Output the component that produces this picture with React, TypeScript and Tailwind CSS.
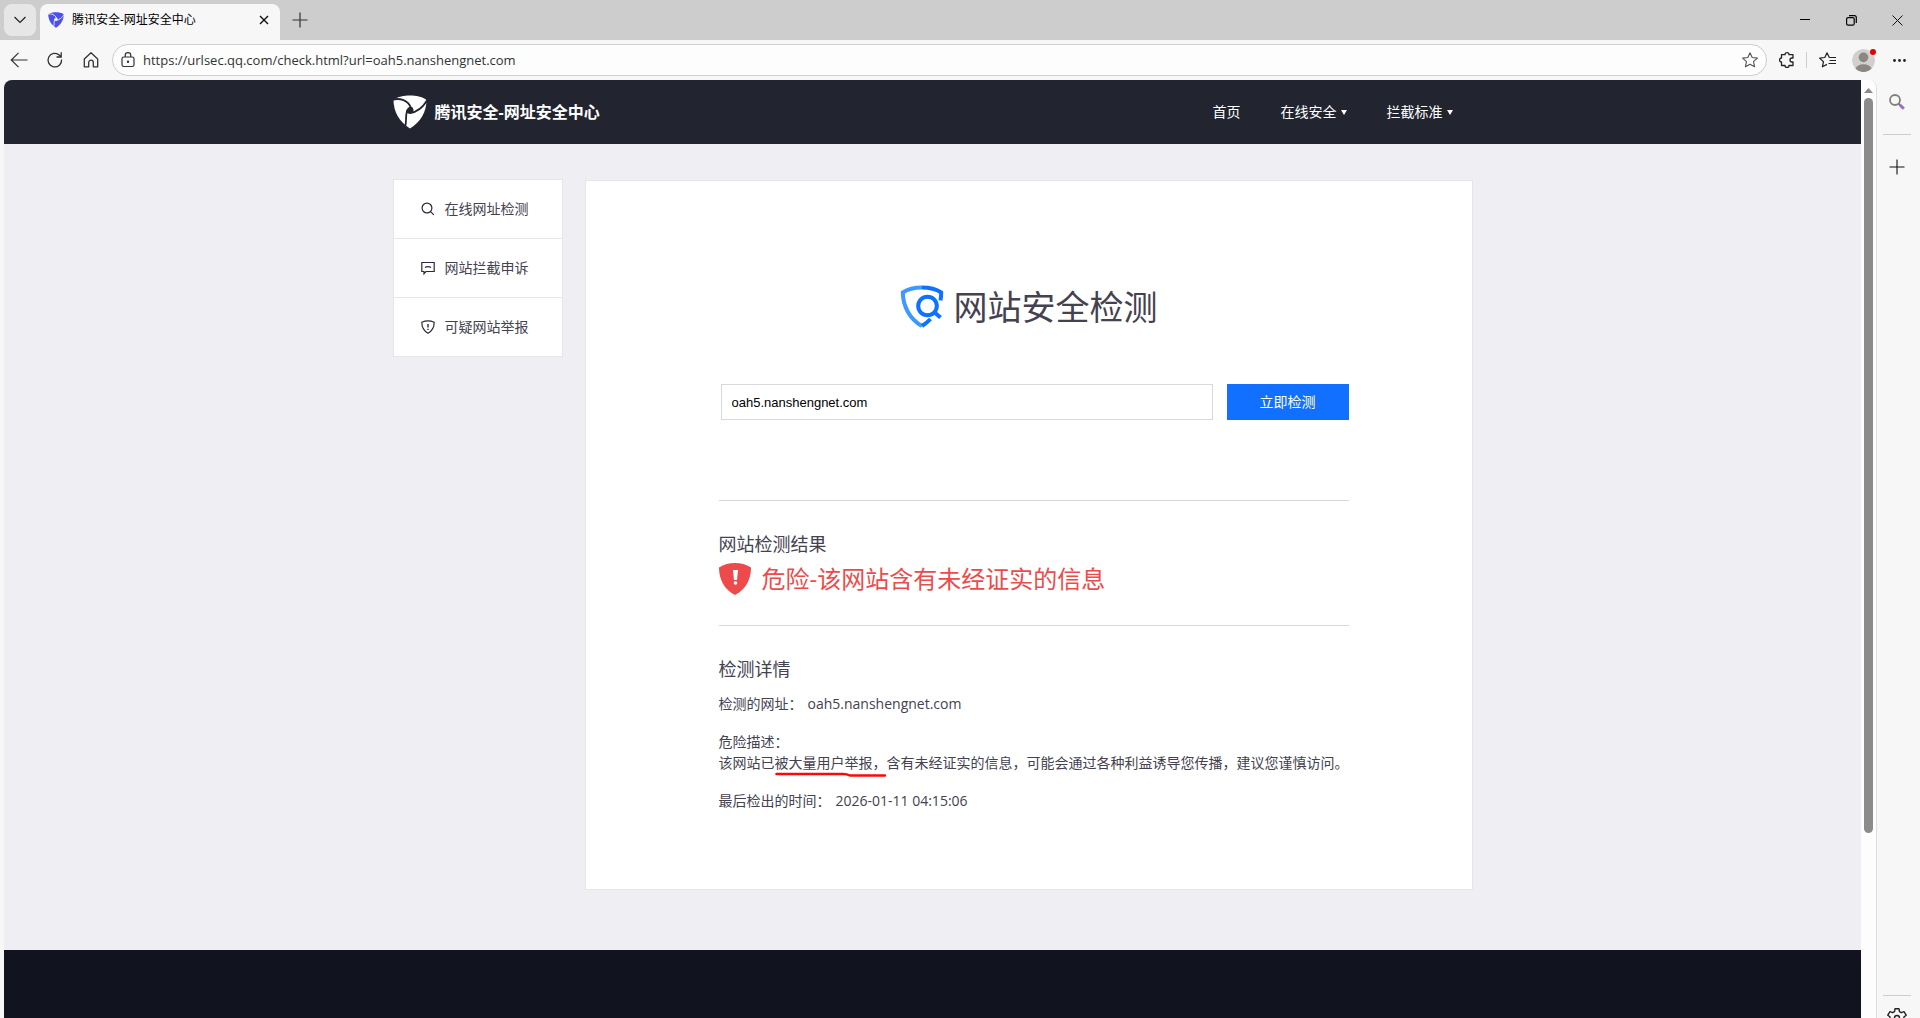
import React, { useState } from 'react';
import clsx from 'clsx';

const menuItems = [
  { label: '在线网址检测', icon: 'search' },
  { label: '网站拦截申诉', icon: 'comment' },
  { label: '可疑网站举报', icon: 'shield' },
];

const navItems = [
  { label: '首页', hasMenu: false },
  { label: '在线安全', hasMenu: true },
  { label: '拦截标准', hasMenu: true },
];

const Logo: React.FC<{ className: string; gapColor: string }> = ({ className, gapColor }) => (
  <svg viewBox="0 0 34 34" className={className} fill="none" aria-hidden="true">
    <path d="M.5 5C5 1.5 11 .5 17 .5S29 1.5 33.500 5C33.500 16 28 27 17 33.500 6 27 .5 16 .5 5Z" fill="currentColor" />
    <g stroke={gapColor} strokeLinecap="round">
      <path d="M0 4.500C7 3 15 5 18 13" strokeWidth="1.800" />
      <path d="M34 5.500C30 12 25 17 17 18" strokeWidth="1.800" />
      <path d="M12 32C14 27 12 23 14 16" strokeWidth="1.800" />
      <path d="M14 17C14 13 17 12 19 13 21 16 19 18 16 18Z" strokeWidth="1.500" fill={gapColor} />
    </g>
  </svg>
);

const MenuIcon: React.FC<{ name: string }> = ({ name }) => (
  <svg viewBox="0 0 14 14" className="size-3.5" fill="none" stroke="#2b2938" strokeWidth="1.2" aria-hidden="true">
    {name === 'search' && (
      <>
        <circle cx="6" cy="6" r="4.900" />
        <path d="M9.600 9.600 12.800 12.800" />
      </>
    )}
    {name === 'comment' && (
      <>
        <path d="M.8 1.500H13.200V10.500H5L3 12.700V10.500H.8Z" />
        <path d="M4 6.500C5.500 5.400 8.500 5.400 10 6.500" />
      </>
    )}
    {name === 'shield' && (
      <>
        <path d="M.8 2.200C4.500.6 9.500.6 13.200 2.200 13.200 7 11 11 7 13.200 3 11 .8 7 .8 2.200Z" />
        <path d="M7 4V7.500M7 8.700V10" strokeWidth="1.400" />
      </>
    )}
  </svg>
);

const TabBar: React.FC = () => (
  <div className="flex h-10 shrink-0 items-start bg-[#cdcdcd]">
    <button aria-label="标签页操作" className="m-1 flex size-8 items-center justify-center rounded-lg bg-[#e6e6e6]">
      <svg viewBox="0 0 12 12" className="size-3" fill="none" stroke="#222" strokeWidth="1.200">
        <path d="M.5 3 6 8.500 11.500 3" />
      </svg>
    </button>
    <div className="mt-1 flex h-9 w-60 items-center rounded-t-lg bg-[#f7f7f7] px-2 pb-1 text-black">
      <Logo className="h-4 w-4 text-[#4a50f0]" gapColor="#f7f7f7" />
      <span className="ml-2 flex-1 text-xs">腾讯安全-网址安全中心</span>
      <button aria-label="关闭标签页" className="flex size-4 items-center justify-center">
        <svg viewBox="0 0 10 10" className="size-2.5" fill="none" stroke="#111" strokeWidth="1.400">
          <path d="M1 1 9 9M9 1 1 9" />
        </svg>
      </button>
    </div>
    <button aria-label="新建标签页" className="ml-3 flex h-10 w-4 items-center justify-center">
      <svg viewBox="0 0 16 16" className="size-4" fill="none" stroke="#333" strokeWidth="1.200">
        <path d="M8 .5V15.500M.5 8H15.500" />
      </svg>
    </button>
    <div className="ml-auto flex h-10">
      <button aria-label="最小化" className="flex w-[46px] items-center justify-center">
        <svg viewBox="0 0 10 10" className="size-2.5" stroke="#000">
          <path d="M0 4.500H10" />
        </svg>
      </button>
      <button aria-label="还原" className="flex w-[46px] items-center justify-center">
        <svg viewBox="0 0 11 11" className="size-[11px]" fill="none" stroke="#000" strokeWidth="1.200">
          <rect x=".6" y="2.600" width="7.600" height="7.600" rx="1.500" />
          <path d="M3 .6H8.400Q10.300.6 10.300 2.500V8" />
        </svg>
      </button>
      <button aria-label="关闭" className="flex w-[46px] items-center justify-center">
        <svg viewBox="0 0 11 11" className="size-[11px]" stroke="#111">
          <path d="M.5.5 10.500 10.500M10.500.5.5 10.500" />
        </svg>
      </button>
    </div>
  </div>
);

const Toolbar: React.FC = () => {
  const [url, setUrl] = useState('https://urlsec.qq.com/check.html?url=oah5.nanshengnet.com');

  return (
    <div className="flex h-10 shrink-0 items-center bg-[#f7f7f7] text-[#333]">
      <div className="flex gap-[18px] pr-3 pl-2.5">
        <button aria-label="返回">
          <svg viewBox="0 0 18 18" className="size-4.5" fill="none" stroke="currentColor" strokeWidth="1.200">
            <path d="M17.500 9H1.500M8.500 1.800 1.300 9 8.500 16.200" />
          </svg>
        </button>
        <button aria-label="刷新">
          <svg viewBox="0 0 18 18" className="size-4.5" fill="none" stroke="currentColor" strokeWidth="1.300">
            <path d="M15.600 8.500A6.800 6.800 0 1 1 13.500 4.200L15 5.700M15.200 1.300V6H10.500" />
          </svg>
        </button>
        <button aria-label="主页">
          <svg viewBox="0 0 18 18" className="size-4.5" fill="none" stroke="currentColor" strokeWidth="1.300" strokeLinejoin="round">
            <path d="M2.300 8 9 1.800 15.700 8V15.800H11.300V11.500A2.300 2.300 0 0 0 6.700 11.500V15.800H2.300Z" />
          </svg>
        </button>
      </div>
      <div className="flex h-8 flex-1 items-center rounded-full border border-[#cdcdcd] bg-[#fdfdfd] px-2">
        <svg viewBox="0 0 14 16" className="h-4 w-3.5 shrink-0" fill="none" stroke="#333" strokeWidth="1.200" aria-hidden="true">
          <rect x="1" y="5" width="12" height="9.500" rx="1.800" />
          <path d="M4.200 5V3.500a2.800 2.800 0 0 1 5.600 0V5" />
          <circle cx="7" cy="9.700" r=".6" fill="#333" />
        </svg>
        <input
          aria-label="地址栏"
          value={url}
          onChange={(e) => setUrl(e.target.value)}
          className="ml-2 h-6 min-w-0 flex-1 bg-transparent font-['Open_Sans','Noto_Sans_CJK_SC',sans-serif] text-[13px] text-[#333] outline-none"
        />
        <button aria-label="收藏此页">
          <svg viewBox="0 0 16 16" className="size-4" fill="none" stroke="#555" strokeWidth="1.100" strokeLinejoin="round">
            <path d="M8 .8 10.200 5.500 15.400 6.100 11.500 9.700 12.600 14.800 8 12.200 3.400 14.800 4.500 9.700.6 6.100 5.800 5.500Z" />
          </svg>
        </button>
      </div>
      <div className="flex items-center pr-3.5 pl-3">
        <button aria-label="扩展">
          <svg viewBox="0 0 16 16" className="size-4" fill="none" stroke="#222" strokeWidth="1.300" strokeLinejoin="round">
            <path d="M2.500 2.700H6A2 2 0 0 1 10 2.700H14V6H13A2 2 0 0 0 13 10H14V13.500H10A2 2 0 0 1 6 13.500H2.500V10A2 2 0 0 1 2.500 6Z" />
          </svg>
        </button>
        <span className="ml-[11px] h-4 w-px bg-[#cdcdcd]" />
        <button aria-label="收藏夹" className="ml-3">
          <svg viewBox="0 0 17 16" className="h-4 w-[17px]" fill="none" stroke="#222" strokeWidth="1.200" strokeLinejoin="round">
            <path d="M10.300 5.500 8 .8 5.800 5.500.6 6.100 4.500 9.700 3.400 14.800 8 12.400M10.300 5.500H17M10.500 8.500H17M9.500 11.500H17" />
          </svg>
        </button>
        <button aria-label="个人资料" className="relative ml-4 size-[23px]">
          <svg viewBox="0 0 24 24" className="size-[23px] rounded-full">
            <circle cx="12" cy="12" r="12" fill="#d2cfcc" />
            <circle cx="12" cy="8.700" r="5" fill="#8b8783" />
            <path d="M3.500 20.500A9 7 0 0 1 20.500 20.500 12 12 0 0 1 3.500 20.500Z" fill="#8b8783" />
          </svg>
          <span className="absolute top-0 -right-px size-1.5 rounded-full bg-[#e60000]" />
        </button>
        <button aria-label="更多" className="ml-4.5">
          <svg viewBox="0 0 13 3" className="h-[3px] w-[13px]" fill="#222">
            <circle cx="1.500" cy="1.500" r="1.400" />
            <circle cx="6.500" cy="1.500" r="1.400" />
            <circle cx="11.500" cy="1.500" r="1.400" />
          </svg>
        </button>
      </div>
    </div>
  );
};

const SideRail: React.FC = () => (
  <aside className="flex w-[43px] shrink-0 flex-col items-center overflow-hidden bg-[#f7f7f7] pr-[3px]">
    <button aria-label="搜索" className="mt-3.5">
      <svg viewBox="0 0 16 16" className="size-4" fill="none">
        <path d="M9.500 9.500 12 12" stroke="#777" strokeWidth="2" />
        <path d="M11.300 11.300 14.800 14.800" stroke="#9a6bd6" strokeWidth="3" />
        <circle cx="6" cy="6" r="5" stroke="#808080" strokeWidth="1.800" />
      </svg>
    </button>
    <span className="mt-6 h-px w-7 bg-[#cdcdcd]" />
    <button aria-label="自定义" className="mt-6">
      <svg viewBox="0 0 16 16" className="size-4" stroke="#111" strokeWidth="1.100">
        <path d="M8 .5V15.500M.5 8H15.500" />
      </svg>
    </button>
    <div className="mt-auto flex h-[23px] flex-col items-center overflow-hidden">
      <span className="h-px w-7 shrink-0 bg-[#cdcdcd]" />
      <button aria-label="设置" className="mt-3 shrink-0">
        <svg viewBox="0 0 20 20" className="size-5" fill="none" stroke="#222" strokeWidth="1.400" strokeLinejoin="round">
          <path d="M8 .8H12L12.500 3.700 14.300 4.700 17 3.700 19.200 7.200 16.900 9V11L19.200 12.800 17 16.300 14.300 15.300 12.500 16.300 12 19.200H8L7.500 16.300 5.700 15.300 3 16.300.8 12.800 3.100 11V9L.8 7.200 3 3.700 5.700 4.700 7.500 3.700Z" />
          <circle cx="10" cy="10" r="2.500" />
        </svg>
      </button>
    </div>
  </aside>
);

const SiteHeader: React.FC = () => (
  <header className="h-16 shrink-0 bg-[#222430] text-white">
    <div className="mx-auto flex h-16 max-w-[1080px] items-center">
      <a href="#home" className="flex items-center">
        <Logo className="size-[34px]" gapColor="#222430" />
        <span className="ml-2 text-base leading-6 font-bold">腾讯安全-网址安全中心</span>
      </a>
      <nav className="ml-auto flex items-center gap-10 pr-5 text-sm">
        {navItems.map((item) => (
          <a key={item.label} href="#nav" className="flex items-center gap-1">
            {item.label}
            {item.hasMenu && (
              <svg viewBox="0 0 6 5" className="h-[5px] w-1.5" fill="currentColor" aria-hidden="true">
                <path d="M0 0H6L3 5Z" />
              </svg>
            )}
          </a>
        ))}
      </nav>
    </div>
  </header>
);

const SideMenu: React.FC = () => (
  <nav className="w-[170px] shrink-0 self-start border border-[#e5e5ea] bg-white">
    {menuItems.map((item, i) => (
      <a
        key={item.label}
        href="#menu"
        className={clsx('flex h-[58px] items-center pl-[27px] text-sm text-[#444150]', i > 0 && 'box-content border-t border-[#e5e5ea]')}
      >
        <MenuIcon name={item.icon} />
        <span className="ml-2.5">{item.label}</span>
      </a>
    ))}
  </nav>
);

const CheckPanel: React.FC = () => {
  const [domain, setDomain] = useState('oah5.nanshengnet.com');

  return (
    <section className="mt-px min-w-0 flex-1 border border-[#e5e5ea] bg-white pt-[102px] pb-[78px] text-[#444150]">
      <h1 className="flex items-center justify-center gap-2.5 text-[34px] leading-12">
        <svg viewBox="0 0 44 44" className="size-11" fill="none" strokeWidth="4" aria-hidden="true">
          <path d="M22 2.500C15 2.500 8 4 2.800 7.500 3 21 9.500 34 22 41" stroke="#3d98ff" />
          <path d="M22 2.500C29 2.500 36 4 41.200 7.500 41.200 10 41 12.500 40.500 15.500M22 41C25.500 38.800 28 36.700 30.500 34" stroke="#0d72ff" />
          <circle cx="27.500" cy="21" r="9.300" stroke="#0d72ff" />
          <path d="M33.500 26.500 40.500 32.500" stroke="#0d72ff" />
        </svg>
        网站安全检测
      </h1>

      <div className="pr-[123px] pl-[133px]">
        <form className="mt-[53px] flex gap-3.5 pl-0.5" onSubmit={(e) => e.preventDefault()}>
          <input
            aria-label="网址"
            value={domain}
            onChange={(e) => setDomain(e.target.value)}
            className="h-9 min-w-0 flex-1 border border-[#d8d8df] px-2.5 font-['Liberation_Sans',sans-serif] text-[13px] text-black outline-none"
          />
          <button type="submit" className="h-9 w-[122px] bg-[#1170ff] text-sm text-white">
            立即检测
          </button>
        </form>

        <div className="mt-20 border-t border-[#d8d8dc] pt-[31px]">
          <h2 className="text-lg leading-6">网站检测结果</h2>
          <p className="mt-[5px] flex items-center gap-[11px] text-2xl leading-9 text-[#ed4b4b]">
            <svg viewBox="0 0 32 32" className="size-8" aria-hidden="true">
              <path d="M0 4.500C5 1.300 10 0 16 0S27 1.300 32 4.500C32 16 27 26.500 16 32 5 26.500 0 16 0 4.500Z" fill="currentColor" />
              <path d="M14 7H19L18 17H15Z" fill="#fff" />
              <circle cx="16.500" cy="20" r="1.800" fill="#fff" />
            </svg>
            危险-该网站含有未经证实的信息
          </p>
        </div>

        <div className="mt-7 border-t border-[#d8d8dc] pt-[31px]">
          <h2 className="text-lg leading-6">检测详情</h2>
          <dl className="mt-3 text-sm leading-[21px]">
            <div className="flex gap-[5px]">
              <dt>检测的网址：</dt>
              <dd>oah5.nanshengnet.com</dd>
            </div>
            <div className="mt-[17px]">
              <dt>危险描述：</dt>
              <dd className="whitespace-nowrap">
                该网站已
                <span className="relative inline-block">
                  被大量用户举报，
                  <svg
                    viewBox="0 0 112 6"
                    className="absolute top-5 left-0 h-1.5 w-28"
                    fill="none"
                    stroke="#fb0909"
                    strokeWidth="2.500"
                    strokeLinecap="round"
                    aria-hidden="true"
                  >
                    <path d="M1.500 2H68Q72 2 75 3.500H110" />
                  </svg>
                </span>
                含有未经证实的信息，可能会通过各种利益诱导您传播，建议您谨慎访问。
              </dd>
            </div>
            <div className="mt-[17px] flex gap-[5px]">
              <dt>最后检出的时间：</dt>
              <dd>2026-01-11 04:15:06</dd>
            </div>
          </dl>
        </div>
      </div>
    </section>
  );
};

const ScrollBar: React.FC = () => (
  <div className="flex w-[15px] shrink-0 flex-col items-center bg-[#fdfdfd] pt-2" aria-hidden="true">
    <svg viewBox="0 0 9 5" className="h-[5px] w-[9px]" fill="#8b8b8b">
      <path d="M0 5 4.500 0 9 5Z" />
    </svg>
    <div className="mt-[5px] h-[79%] w-[9px] rounded-full bg-[#8b8b8b]" />
  </div>
);

export default function App() {
  return (
    <div lang="zh-CN" className="flex h-screen flex-col bg-[#f7f7f7] font-['Open_Sans','Noto_Sans_CJK_SC',sans-serif]">
      <TabBar />
      <Toolbar />
      <div className="flex min-h-0 flex-1 pl-1">
        <div className="flex min-w-0 flex-1 overflow-hidden rounded-t-lg border-r border-[#dedede]">
          <div className="flex min-w-0 flex-1 flex-col overflow-hidden">
            <SiteHeader />
            <main className="shrink-0 bg-[#efeef3] pt-[35px] pb-[60px]">
              <div className="mx-auto flex max-w-[1080px] gap-[22px]">
                <SideMenu />
                <CheckPanel />
              </div>
            </main>
            <footer className="flex-1 bg-[#11131f]" />
          </div>
          <ScrollBar />
        </div>
        <SideRail />
      </div>
    </div>
  );
}
